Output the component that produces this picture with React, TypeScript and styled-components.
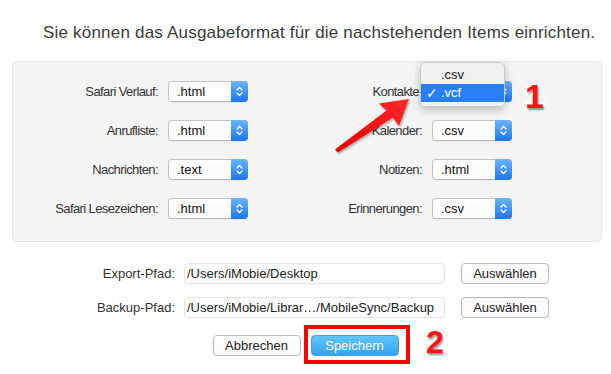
import React from "react";
import styled, { createGlobalStyle } from "styled-components";

const Global = createGlobalStyle`
  html, body { margin: 0; padding: 0; background: #fff; }
  body { font-family: "Liberation Sans", Arial, sans-serif; }
`;

const Page = styled.div`
  position: relative;
  width: 611px;
  height: 374px;
  overflow: hidden;
  background: #fff;
  padding-top: 23px;
  box-sizing: border-box;
`;

const Title = styled.h1`
  margin: 0 0 0 43px;
  font-size: 17px;
  font-weight: normal;
  line-height: 20px;
  letter-spacing: 0.2px;
  color: #3a3a3a;
  white-space: nowrap;
`;

const Panel = styled.div`
  margin: 18px 9px 0 12px;
  box-sizing: border-box;
  height: 181px;
  background: #f4f4f4;
  border: 1px solid #e6e6e6;
  border-radius: 5px;
  padding: 19px 0 22px 9px;
  display: grid;
  grid-template-columns: 136px 80px 164px 80px;
  grid-auto-rows: 21px;
  column-gap: 10px;
  row-gap: 18px;
`;

const FieldLabel = styled.div`
  text-align: right;
  font-size: 13px;
  line-height: 21px;
  color: #333;
  letter-spacing: -0.6px;
  white-space: nowrap;
`;

const SelectField = styled.div`
  position: relative;
  display: flex;
  height: 21px;
  box-sizing: border-box;
  border: 1px solid #c3c3c3;
  border-bottom-color: #b5b5b5;
  border-radius: 4px;
  background: linear-gradient(#ffffff, #fbfbfb);
  box-shadow: 0 1px 1px rgba(0, 0, 0, 0.04);
`;

const SelectValue = styled.div`
  flex: 1;
  padding-left: 8px;
  font-size: 13px;
  line-height: 20px;
  color: #111;
`;

const Stepper = styled.div`
  width: 17px;
  margin: -1px -1px -1px 0;
  border-radius: 0 4px 4px 0;
  background: linear-gradient(#6cb4fc, #1a76f2);
  display: flex;
  align-items: center;
  justify-content: center;
`;

const Menu = styled.div`
  position: absolute;
  left: -13px;
  top: -20px;
  width: 85px;
  box-sizing: border-box;
  padding: 3px 0 4px;
  background: rgba(241, 241, 241, 0.98);
  border: 1px solid #c9c9c9;
  border-radius: 5px;
  box-shadow: 0 3px 8px rgba(0, 0, 0, 0.22);
  z-index: 5;
`;

const MenuItem = styled.div<{ $active?: boolean }>`
  position: relative;
  height: 18px;
  padding-left: 20px;
  font-size: 13px;
  line-height: 18px;
  color: ${(p) => (p.$active ? "#fff" : "#222")};
  background: ${(p) => (p.$active ? "#2b7ff6" : "transparent")};
`;

const Check = styled.span`
  position: absolute;
  left: 5px;
  top: 0;
  font-size: 14px;
  font-family: "DejaVu Sans", sans-serif;
  font-weight: bold;
`;

const PathGrid = styled.div`
  margin-top: 21px;
  display: flex;
  flex-direction: column;
  gap: 13px;
  padding-left: 60px;
`;

const PathRow = styled.div`
  display: flex;
  align-items: center;
  height: 21px;
`;

const PathLabel = styled.div`
  width: 115px;
  margin-right: 9px;
  text-align: right;
  font-size: 13px;
  color: #333;
  white-space: nowrap;
`;

const PathInput = styled.div`
  width: 261px;
  height: 21px;
  box-sizing: border-box;
  border: 1px solid #e4e4e4;
  border-radius: 4px;
  background: #fff;
  padding-left: 2px;
  font-size: 13px;
  line-height: 19px;
  color: #222;
  white-space: nowrap;
  overflow: hidden;
`;

const Button = styled.button<{ $primary?: boolean }>`
  width: 88px;
  height: 21px;
  box-sizing: border-box;
  border-radius: 4px;
  padding: 0;
  font-family: "Liberation Sans", Arial, sans-serif;
  font-size: 13px;
  color: ${(p) => (p.$primary ? "#fff" : "#222")};
  border: 1px solid ${(p) => (p.$primary ? "#3ea2e6" : "#b9b9b9")};
  background: ${(p) =>
    p.$primary ? "linear-gradient(#62c6fc, #34a3f1)" : "linear-gradient(#fff, #fafafa)"};
`;

const ChooseButton = styled(Button)`
  margin-left: 16px;
`;

const ActionRow = styled.div`
  margin-top: 17px;
  display: flex;
  justify-content: center;
  gap: 10px;
`;

const Highlighted = styled.div`
  position: relative;
  display: flex;
`;

const RedFrame = styled.div`
  position: absolute;
  left: -7px;
  top: -10px;
  right: -11px;
  bottom: -8px;
  border: 4px solid #ff0000;
  pointer-events: none;
`;

const StepNumber = styled.span<{ $x: number; $y: number; $size: number }>`
  position: absolute;
  left: ${(p) => p.$x}px;
  top: ${(p) => p.$y}px;
  font-family: "Liberation Sans", Arial, sans-serif;
  font-weight: bold;
  font-size: ${(p) => p.$size}px;
  line-height: 1;
  color: #ff1414;
  -webkit-text-stroke: 4px #fff;
  paint-order: stroke fill;
  text-shadow: 1px 2px 2px rgba(0, 0, 0, 0.45);
  z-index: 6;
`;

const ArrowSvg = styled.svg`
  position: absolute;
  left: 330px;
  top: 95px;
  width: 85px;
  height: 62px;
  z-index: 6;
  overflow: visible;
`;

const Chevrons = () => (
  <svg width="9" height="15" viewBox="0 0 9 15">
    <path d="M2 6 L4.5 3.5 L7 6" fill="none" stroke="#fff" strokeWidth="1.3" strokeLinecap="round" strokeLinejoin="round" />
    <path d="M2 9 L4.5 11.5 L7 9" fill="none" stroke="#fff" strokeWidth="1.3" strokeLinecap="round" strokeLinejoin="round" />
  </svg>
);

type SelectProps = { value: string; children?: React.ReactNode };
const Select = ({ value, children }: SelectProps) => (
  <SelectField>
    <SelectValue>{value}</SelectValue>
    <Stepper>
      <Chevrons />
    </Stepper>
    {children}
  </SelectField>
);

export default function App() {
  return (
    <>
      <Global />
      <Page>
        <Title>Sie können das Ausgabeformat für die nachstehenden Items einrichten.</Title>
        <Panel>
          <FieldLabel>Safari Verlauf:</FieldLabel>
          <Select value=".html" />
          <FieldLabel>Kontakte:</FieldLabel>
          <Select value=".vcf">
            <Menu>
              <MenuItem>.csv</MenuItem>
              <MenuItem $active>
                <Check>✓</Check>.vcf
              </MenuItem>
            </Menu>
          </Select>

          <FieldLabel>Anrufliste:</FieldLabel>
          <Select value=".html" />
          <FieldLabel>Kalender:</FieldLabel>
          <Select value=".csv" />

          <FieldLabel>Nachrichten:</FieldLabel>
          <Select value=".text" />
          <FieldLabel>Notizen:</FieldLabel>
          <Select value=".html" />

          <FieldLabel>Safari Lesezeichen:</FieldLabel>
          <Select value=".html" />
          <FieldLabel>Erinnerungen:</FieldLabel>
          <Select value=".csv" />
        </Panel>

        <PathGrid>
          <PathRow>
            <PathLabel>Export-Pfad:</PathLabel>
            <PathInput>/Users/iMobie/Desktop</PathInput>
            <ChooseButton>Auswählen</ChooseButton>
          </PathRow>
          <PathRow>
            <PathLabel>Backup-Pfad:</PathLabel>
            <PathInput>/Users/iMobie/Librar…/MobileSync/Backup</PathInput>
            <ChooseButton>Auswählen</ChooseButton>
          </PathRow>
        </PathGrid>

        <ActionRow>
          <Button>Abbrechen</Button>
          <Highlighted>
            <Button $primary>Speichern</Button>
            <RedFrame />
          </Highlighted>
        </ActionRow>

        <ArrowSvg viewBox="330 95 85 62">
          <defs>
            <linearGradient id="arrowFill" x1="0" y1="1" x2="1" y2="0">
              <stop offset="0" stopColor="#e00000" />
              <stop offset="1" stopColor="#ff2a2a" />
            </linearGradient>
            <filter id="arrowShadow" x="-20%" y="-20%" width="140%" height="140%">
              <feDropShadow dx="1" dy="1.5" stdDeviation="1" floodColor="#000" floodOpacity="0.35" />
            </filter>
          </defs>
          <polygon
            points="409,99 379,103.5 386.5,110.5 335,149.5 338,152.5 393,117.5 399,126"
            fill="url(#arrowFill)"
            filter="url(#arrowShadow)"
          />
        </ArrowSvg>

        <StepNumber $x={525} $y={79} $size={34}>1</StepNumber>
        <StepNumber $x={426} $y={326} $size={32}>2</StepNumber>
      </Page>
    </>
  );
}
